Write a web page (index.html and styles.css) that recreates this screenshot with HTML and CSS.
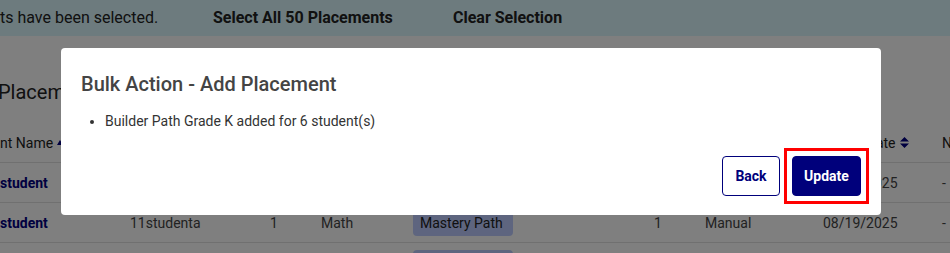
FILE: index.html
```html
<!DOCTYPE html>
<html lang="en">
<head>
<meta charset="utf-8">
<title>Bulk Action - Add Placement</title>
<link rel="stylesheet" href="styles.css">
</head>
<body>
<div class="page">
  <div class="selbar">
    <span class="sel-msg">ts have been selected.</span>
    <span class="sel-link sel-all">Select All 50 Placements</span>
    <span class="sel-link">Clear Selection</span>
  </div>
  <h2 class="page-title">Placements</h2>
  <div class="table">
    <div class="row head">
      <div class="c">nt Name <svg class="sort" width="6" height="5" viewBox="0 0 6 5"><path d="M0 5 L3 0 L6 5 Z"/></svg></div>
      <div class="c">Username</div>
      <div class="c">Grade</div>
      <div class="c">Subject</div>
      <div class="c">Placement</div>
      <div class="c">Level</div>
      <div class="c">Type</div>
      <div class="c">Added Date <svg class="sort2" width="9" height="11" viewBox="0 0 9 11"><path d="M0 4.5 L4.5 0 L9 4.5 Z M0 6.5 L4.5 11 L9 6.5 Z"/></svg></div>
      <div class="c">Notes</div>
    </div>
    <div class="row">
      <div class="c name">student</div>
      <div class="c">10studenta</div>
      <div class="c">1</div>
      <div class="c">Math</div>
      <div class="c"><span class="chip">Mastery Path</span></div>
      <div class="c">1</div>
      <div class="c">Manual</div>
      <div class="c">08/19/2025</div>
      <div class="c">-</div>
    </div>
    <div class="row">
      <div class="c name">student</div>
      <div class="c">11studenta</div>
      <div class="c">1</div>
      <div class="c">Math</div>
      <div class="c"><span class="chip">Mastery Path</span></div>
      <div class="c">1</div>
      <div class="c">Manual</div>
      <div class="c">08/19/2025</div>
      <div class="c">-</div>
    </div>
    <div class="row">
      <div class="c name">student</div>
      <div class="c">12studenta</div>
      <div class="c">1</div>
      <div class="c">Math</div>
      <div class="c"><span class="chip">Mastery Path</span></div>
      <div class="c">1</div>
      <div class="c">Manual</div>
      <div class="c">08/19/2025</div>
      <div class="c">-</div>
    </div>
  </div>
</div>
<div class="overlay"></div>
<div class="modal" role="dialog">
  <h3 class="modal-title">Bulk Action - Add Placement</h3>
  <ul class="modal-list">
    <li>Builder Path Grade K added for 6 student(s)</li>
  </ul>
  <div class="modal-foot">
    <button class="btn btn-back">Back</button>
    <button class="btn btn-update">Update</button>
  </div>
</div>
</body>
</html>
```
FILE: styles.css
```css
* { box-sizing: border-box; }
html, body {
  margin: 0;
  padding: 0;
  width: 950px;
  height: 253px;
  overflow: hidden;
  background: #ffffff;
  font-family: Roboto, "Liberation Sans", Arial, sans-serif;
}
.page {
  width: 950px;
}
.selbar {
  height: 36px;
  background: #daf6fc;
  display: flex;
  align-items: center;
  font-size: 16px;
  color: #222222;
  padding-bottom: 2px;
}
.sel-msg { width: 213px; }
.sel-all { width: 240px; }
.sel-link { font-weight: 700; }
.page-title {
  margin: 0 0 0 -2px;
  padding: 44px 0 19px 0;
  font-size: 20px;
  line-height: 24px;
  font-weight: 400;
  color: #222222;
}
.table {
  font-size: 14px;
  color: #444444;
}
.row {
  display: grid;
  grid-template-columns: 130px 140px 51px 92px 241px 51px 118px 119px 1fr;
  height: 40px;
  align-items: center;
  border-bottom: 1px solid #e0e0e0;
}
.row.head {
  color: #222222;
  font-size: 14px;
}
.c {
  white-space: nowrap;
  display: flex;
  align-items: center;
  gap: 4px;
}
.name {
  color: #000080;
  font-weight: 700;
}
.sort, .sort2 { fill: #000080; }
.chip {
  display: inline-block;
  width: 100px;
  height: 26px;
  line-height: 26px;
  padding-left: 7px;
  background: #bccbff;
  border-radius: 4px;
  color: #222222;
}
.overlay {
  position: fixed;
  inset: 0;
  background: rgba(0, 0, 0, 0.5);
}
.modal {
  position: fixed;
  left: 61px;
  top: 48px;
  width: 820px;
  height: 167px;
  background: #ffffff;
  border-radius: 4px;
  padding: 24px 20px 19px 20px;
  display: flex;
  flex-direction: column;
}
.modal-title {
  margin: 0;
  font-size: 20px;
  line-height: 24px;
  font-weight: 500;
  color: #444444;
}
.modal-list {
  margin: 15px 0 0 0;
  padding-left: 24px;
  font-size: 14px;
  line-height: 20px;
  color: #333333;
}
.modal-foot {
  margin-top: auto;
  display: flex;
  justify-content: flex-end;
  gap: 12px;
}
.btn {
  height: 40px;
  border-radius: 4px;
  font-family: Roboto, "Liberation Sans", Arial, sans-serif;
  font-size: 14px;
  font-weight: 700;
  cursor: pointer;
}
.btn-back {
  width: 58px;
  background: #ffffff;
  border: 1px solid #00007b;
  color: #00007b;
}
.btn-update {
  position: relative;
  width: 69px;
  background: #00007b;
  border: 1px solid #00007b;
  color: #ffffff;
}
.btn-update::after {
  content: "";
  position: absolute;
  left: -9px;
  top: -9px;
  right: -9px;
  bottom: -9px;
  border: 3px solid #ff0000;
}
```
